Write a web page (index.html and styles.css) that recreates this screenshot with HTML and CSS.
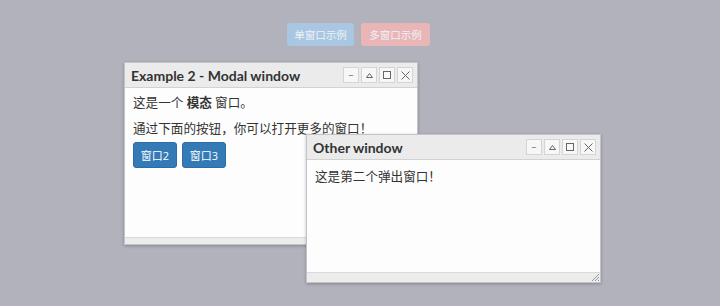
FILE: index.html
```html
<!DOCTYPE html>
<html lang="zh-CN">
<head>
  <meta charset="UTF-8">
  <title>窗口示例</title>
  <link rel="stylesheet" href="styles.css">
</head>
<body>
  <div class="toolbar">
    <button class="btn-single">单窗口示例</button>
    <button class="btn-multi">多窗口示例</button>
  </div>

  <div class="window win-modal">
    <div class="win-title">
      <span>Example 2 - Modal window</span>
      <div class="win-controls">
        <span class="ctl">&minus;</span>
        <span class="ctl"><svg width="7" height="5" viewBox="0 0 7 5"><path d="M3.5 0.5 L6.5 4.5 H0.5 Z" fill="none" stroke="#666" stroke-width="1"/></svg></span>
        <span class="ctl"><svg width="8" height="8" viewBox="0 0 8 8"><rect x="0.5" y="0.5" width="7" height="7" fill="none" stroke="#666"/></svg></span>
        <span class="ctl"><svg width="9" height="9" viewBox="0 0 9 9"><path d="M0.5 0.5 L8.5 8.5 M8.5 0.5 L0.5 8.5" stroke="#666" stroke-width="1"/></svg></span>
      </div>
    </div>
    <div class="win-body">
      <p>这是一个 <b>模态</b> 窗口。</p>
      <p>通过下面的按钮，你可以打开更多的窗口！</p>
      <div class="actions">
        <button class="btn-primary">窗口2</button>
        <button class="btn-primary">窗口3</button>
      </div>
    </div>
    <div class="win-status"></div>
  </div>

  <div class="window win-other">
    <div class="win-title">
      <span>Other window</span>
      <div class="win-controls">
        <span class="ctl">&minus;</span>
        <span class="ctl"><svg width="7" height="5" viewBox="0 0 7 5"><path d="M3.5 0.5 L6.5 4.5 H0.5 Z" fill="none" stroke="#666" stroke-width="1"/></svg></span>
        <span class="ctl"><svg width="8" height="8" viewBox="0 0 8 8"><rect x="0.5" y="0.5" width="7" height="7" fill="none" stroke="#666"/></svg></span>
        <span class="ctl"><svg width="9" height="9" viewBox="0 0 9 9"><path d="M0.5 0.5 L8.5 8.5 M8.5 0.5 L0.5 8.5" stroke="#666" stroke-width="1"/></svg></span>
      </div>
    </div>
    <div class="win-body">
      <p>这是第二个弹出窗口！</p>
    </div>
    <div class="win-status">
      <svg class="grip" width="9" height="9" viewBox="0 0 9 9"><path d="M8 1 L1 8 M8 4 L4 8 M8 7 L7 8" stroke="#999" stroke-width="1"/></svg>
    </div>
  </div>
</body>
</html>
```

FILE: styles.css
```css
body {
  margin: 0;
  height: 306px;
  background: #b2b2bc;
  font-family: "Open Sans", "Noto Sans CJK SC", sans-serif;
  color: #333;
  font-size: 12.6px;
  position: relative;
  overflow: hidden;
}
.toolbar {
  display: flex;
  justify-content: center;
  gap: 7px;
  padding-top: 23px;
  padding-right: 3px;
}
.toolbar button {
  border: none;
  border-radius: 3px;
  height: 23px;
  padding: 0;
  white-space: nowrap;
  font-family: inherit;
  font-size: 10.5px;
  color: #eef2f7;
}
.btn-single {
  background: #a9c7e2;
  width: 67px;
}
.btn-multi {
  background: #e9b5b7;
  width: 69px;
}
.window {
  position: absolute;
  background: #fdfdfd;
  border: 1px solid #c4c4c8;
  box-shadow: 0 1px 3px rgba(0, 0, 0, 0.25);
  display: flex;
  flex-direction: column;
}
.win-modal {
  left: 124px;
  top: 62px;
  width: 292px;
  height: 181px;
}
.win-other {
  left: 306px;
  top: 134px;
  width: 293px;
  height: 147px;
}
.win-title {
  height: 24px;
  background: #ebebeb;
  border-bottom: 1px solid #d2d2d2;
  display: flex;
  align-items: center;
  justify-content: space-between;
  padding: 0 4px 0 6px;
  font-family: Lato, "Open Sans", sans-serif;
  font-size: 14px;
  font-weight: bold;
  color: #333;
  flex-shrink: 0;
}
.win-controls {
  display: flex;
  gap: 2px;
}
.ctl {
  width: 14px;
  height: 14px;
  border: 1px solid #d4d4d4;
  background: #f7f7f7;
  display: flex;
  align-items: center;
  justify-content: center;
  font-size: 10px;
  font-weight: normal;
  color: #666;
}
.win-body {
  flex: 1;
  padding: 6px 8px 0;
}
.win-other .win-body {
  padding-top: 8px;
}
.win-body p {
  margin: 0 0 8px;
  line-height: 18px;
}
.actions {
  display: flex;
  gap: 5px;
  margin-top: -4px;
}
.btn-primary {
  background: #337ab7;
  color: #fff;
  border: 1px solid #2e6da4;
  border-radius: 3px;
  width: 44px;
  height: 26px;
  font-family: inherit;
  font-size: 11px;
  padding: 0;
}
.win-status {
  height: 6px;
  background: #ececec;
  border-top: 1px solid #d9d9d9;
  flex-shrink: 0;
  position: relative;
}
.win-other .win-status {
  height: 9px;
}
.grip {
  position: absolute;
  right: 0;
  bottom: 0;
}
```
